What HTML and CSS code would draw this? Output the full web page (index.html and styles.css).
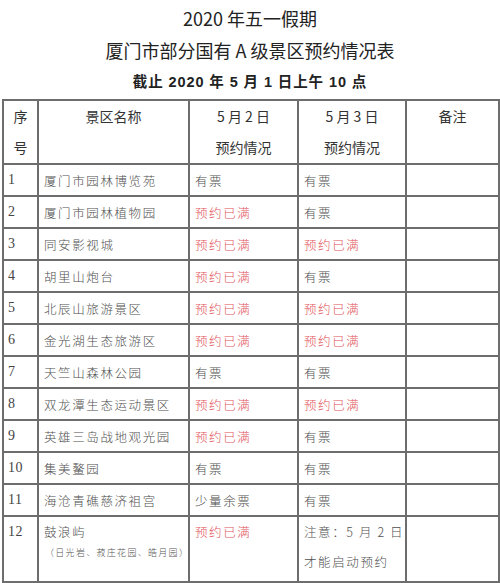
FILE: index.html
```html
<!DOCTYPE html>
<html lang="zh-CN">
<head>
<meta charset="utf-8">
<title>2020 年五一假期 厦门市部分国有 A 级景区预约情况表</title>
<link rel="stylesheet" href="styles.css">
</head>
<body>
<div class="page">
  <h1 class="title">2020 年五一假期</h1>
  <h1 class="title">厦门市部分国有 A 级景区预约情况表</h1>
  <p class="sub">截止 2020 年 5 月 1 日上午 10 点</p>
  <table class="grid">
    <colgroup>
      <col class="c-no"><col class="c-name"><col class="c-d2"><col class="c-d3"><col class="c-note">
    </colgroup>
    <thead>
      <tr>
        <th class="h-no">序<br>号</th>
        <th>景区名称</th>
        <th>5 月 2 日<br>预约情况</th>
        <th>5 月 3 日<br>预约情况</th>
        <th>备注</th>
      </tr>
    </thead>
    <tbody>
      <tr><td class="no">1</td><td>厦门市园林博览苑</td><td>有票</td><td>有票</td><td></td></tr>
      <tr><td class="no">2</td><td>厦门市园林植物园</td><td class="full">预约已满</td><td>有票</td><td></td></tr>
      <tr><td class="no">3</td><td>同安影视城</td><td class="full">预约已满</td><td class="full">预约已满</td><td></td></tr>
      <tr><td class="no">4</td><td>胡里山炮台</td><td class="full">预约已满</td><td>有票</td><td></td></tr>
      <tr><td class="no">5</td><td>北辰山旅游景区</td><td class="full">预约已满</td><td class="full">预约已满</td><td></td></tr>
      <tr><td class="no">6</td><td>金光湖生态旅游区</td><td class="full">预约已满</td><td class="full">预约已满</td><td></td></tr>
      <tr><td class="no">7</td><td>天竺山森林公园</td><td>有票</td><td>有票</td><td></td></tr>
      <tr><td class="no">8</td><td>双龙潭生态运动景区</td><td class="full">预约已满</td><td class="full">预约已满</td><td></td></tr>
      <tr><td class="no">9</td><td>英雄三岛战地观光园</td><td class="full">预约已满</td><td>有票</td><td></td></tr>
      <tr><td class="no">10</td><td>集美鳌园</td><td>有票</td><td>有票</td><td></td></tr>
      <tr><td class="no">11</td><td>海沧青礁慈济祖宫</td><td>少量余票</td><td>有票</td><td></td></tr>
      <tr class="last">
        <td class="no">12</td>
        <td>鼓浪屿<span class="small">（日光岩、菽庄花园、皓月园）</span></td>
        <td class="full">预约已满</td>
        <td>注意：5 月 2 日<br>才能启动预约</td>
        <td></td>
      </tr>
    </tbody>
  </table>
</div>
</body>
</html>
```
FILE: styles.css
```css
html, body {
  margin: 0;
  padding: 0;
  background: #ffffff;
}

.page {
  width: 500px;
  padding-top: 2px;
  font-family: "Noto Sans CJK SC", "Noto Sans", sans-serif;
  color: #2a2a2a;
}

.title {
  margin: 0;
  height: 32px;
  line-height: 32px;
  text-align: center;
  font-size: 18px;
  font-weight: 400;
  color: #222;
}

.sub {
  margin: 0;
  height: 32px;
  line-height: 32px;
  text-align: center;
  font-size: 14.5px;
  font-weight: 700;
  letter-spacing: 0.9px;
  color: #222;
  font-family: "Liberation Sans", "Noto Sans CJK SC", sans-serif;
}

.grid {
  margin: 1px 0 0 2px;
  width: 496px;
  border-collapse: collapse;
  table-layout: fixed;
}

.c-no { width: 35px; }
.c-name { width: 151px; }
.c-d2 { width: 109px; }
.c-d3 { width: 108px; }
.c-note { width: 93px; }

.grid th,
.grid td {
  border: 2px solid #6d6d6d;
  padding: 0;
}

.grid th {
  height: 62px;
  vertical-align: top;
  font-size: 14px;
  font-weight: 400;
  line-height: 31px;
  color: #333;
  text-align: center;
}

.grid td {
  height: 30px;
  padding-left: 5px;
  font-size: 12.5px;
  letter-spacing: 1.6px;
  font-weight: 300;
  color: #505050;
  white-space: nowrap;
}

.grid td.no {
  padding-left: 4px;
  font-family: "Liberation Serif", "Noto Sans CJK SC", serif;
  font-size: 14px;
  letter-spacing: 0.5px;
  font-weight: 400;
  color: #444;
}

.grid td.full {
  color: #e2535a;
}

.grid tr.last td {
  height: 64px;
  vertical-align: top;
  line-height: 30px;
}

.small {
  display: block;
  font-size: 9px;
  line-height: 12px;
  letter-spacing: 1.3px;
  color: #555;
  margin-left: 1px;
}
```
